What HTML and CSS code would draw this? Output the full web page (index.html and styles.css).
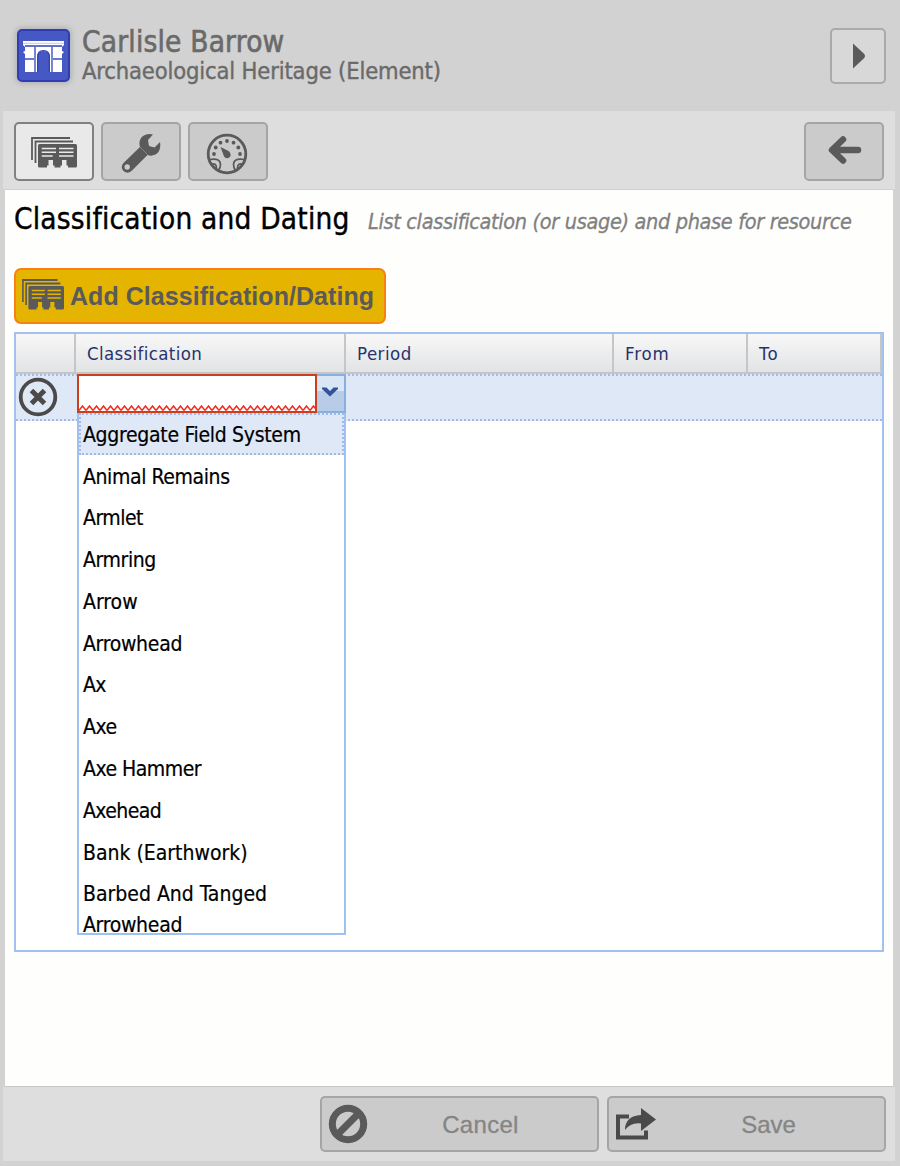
FILE: index.html
```
<!DOCTYPE html>
<html lang="en">
<head>
<meta charset="utf-8">
<title>Carlisle Barrow</title>
<link rel="stylesheet" href="styles.css">
</head>
<body>
<svg class="defs" width="0" height="0">
  <defs>
    <symbol id="cards" viewBox="0 0 46 31">
      <path d="M1 23V1h38M4.500 26V4.500h37.500" fill="none" stroke="currentColor" stroke-width="1.800"/>
      <path fill="currentColor" d="M8.500 7h36a1.500 1.500 0 0 1 1.500 1.500v20.500a1.500 1.500 0 0 1-1.500 1.500H37V28.500h-1.500V23h-4.500v5.500H29.500v2H23.500V28.500H22V23h-4.500v5.500H16v2H8.500A1.500 1.500 0 0 1 7 29V8.500A1.500 1.500 0 0 1 8.500 7z"/>
      <path d="M10.700 11.500h14.300M10.700 15.200h14.300M10.700 18.900h11M28 11.500h14.500M28 15.200h14.500M28 18.900h14.500" fill="none" class="cards-lines" stroke-width="1.500"/>
    </symbol>
  </defs>
</svg>
<div class="app">
  <header class="header">
    <div class="logo">
      <svg width="53" height="53" viewBox="0 0 53 53">
        <rect x="1" y="1" width="51" height="51" rx="4" fill="#4658c4" stroke="#2e3db4" stroke-width="2"/>
        <path d="M6 12h41v4l-2 2v4l2 1-2 2v18H33V28q0-6-6.500-6T20 28v15H8V25l-2-2 2-1v-4l-2-2z" fill="#fff"/>
        <path d="M6 14.300h41" stroke="#c3caee" stroke-width="1"/>
        <path d="M8 17h37M20.700 43V28q0-6.300 5.800-6.300t5.800 6.300v15" fill="none" stroke="#3343b4" stroke-width="1.300"/>
        <path d="M18 18v25M35 18v25M8 30h9M36 30h9" fill="none" stroke="#6a79d0" stroke-width="1.800"/>
      </svg>
    </div>
    <div class="heading">
      <div class="name"><span class="t-name">Carlisle Barrow</span></div>
      <div class="kind"><span class="t-kind">Archaeological Heritage (Element)</span></div>
    </div>
    <button class="expand">
      <svg width="14" height="26" viewBox="0 0 14 26"><path d="M1 .5 12.300 11q1.500 2 0 4L1 25.500z" fill="#5a5a5a"/></svg>
    </button>
  </header>
  <main class="panel">
    <nav class="toolbar">
      <button class="tool tool-on"><svg class="i-cards" width="46" height="31"><use href="#cards"/></svg></button>
      <button class="tool">
        <svg class="i-wrench" width="40" height="40" viewBox="0 0 40 40">
          <path d="M32 1.500 27 7l1 6 5.500 1.500L39 9q1.500 9-4.500 12.500-4 2-8 .5L10.500 38q-4 3.500-8 0-3.500-4 0-8L19 14q-2-7 3-11 4.500-3.200 10-1.500z" fill="#5a5a5a"/>
          <circle cx="6.200" cy="34" r="2.700" fill="#cbcbcb"/><path d="m19 14 7.500 7.500" stroke="#858585"/>
        </svg>
      </button>
      <button class="tool">
        <svg class="i-gauge" width="42" height="42" viewBox="0 0 42 42" fill="none" stroke="#5a5a5a">
          <circle cx="21" cy="21" r="18.800" stroke-width="2.800"/>
          <g fill="#5a5a5a" stroke="none"><circle cx="8" cy="21" r="1.900"/><circle cx="9.700" cy="14.500" r="1.900"/><circle cx="14.500" cy="9.700" r="1.900"/><circle cx="21" cy="8" r="1.900"/><circle cx="27.500" cy="9.700" r="1.900"/><circle cx="32.300" cy="14.500" r="1.900"/><circle cx="34" cy="21" r="1.900"/>
          <path d="m14.500 14 8 4q3 2.500 1.800 5.500-2.300 3-5.300 1-1.300-1-1.700-3z"/></g>
          <path d="M4 26.500q10-2 10.500 5 0 3.500-2 6M5.500 31q5-1 5 4M38 26.500q-10-2-10.500 5 0 3.500 2 6M36.500 31q-5-1-5 4" stroke-width="1.700"/>
        </svg>
      </button>
      <button class="tool tool-back">
        <svg class="i-back" width="34" height="28" viewBox="0 0 34 28"><path d="M15 3.500 4 14l11 10.500M5 14h25" fill="none" stroke="#5a5a5a" stroke-width="6.500" stroke-linecap="round" stroke-linejoin="round"/></svg>
      </button>
    </nav>
    <section class="content">
      <div class="title-row">
        <h1><span class="t-title">Classification and Dating</span></h1>
        <p><span class="t-desc">List classification (or usage) and phase for resource</span></p>
      </div>
      <button class="add">
        <svg width="42" height="31" viewBox="0 0 46 31" preserveAspectRatio="none"><use href="#cards" width="46" height="31"/></svg>
        <span class="t-add">Add Classification/Dating</span>
      </button>
      <div class="grid">
        <div class="row head">
          <div></div>
          <div><span class="t-h1">Classification</span></div>
          <div><span class="t-h2">Period</span></div>
          <div><span class="t-h3">From</span></div>
          <div><span class="t-h4">To</span></div>
        </div>
        <div class="row record">
          <div class="remove">
            <svg width="40" height="40" viewBox="0 0 40 40" fill="none" stroke="#4a4a4a"><circle cx="20" cy="20" r="17.300" stroke-width="3.800"/><path d="m13.500 13.500 13 13m0-13-13 13" stroke-width="5"/></svg>
          </div>
          <div class="combo">
            <div class="field">
              <svg width="237" height="6"><defs><pattern id="zig" width="7" height="6" patternUnits="userSpaceOnUse"><path d="M0 5.500 3.500 1 7 5.500" fill="none" stroke="#f02a1c" stroke-width="1.500"/></pattern></defs><rect width="237" height="6" fill="url(#zig)"/></svg>
            </div>
            <div class="trigger"><svg width="16" height="10" viewBox="0 0 16 10"><path d="M0 .5h4.500L8 4 11.500.5H16v1.500L8 9.500 0 2z" fill="#34529a"/></svg></div>
            <ul class="list">
              <li class="active"><span class="i1">Aggregate Field System</span></li>
              <li><span class="i2">Animal Remains</span></li>
              <li><span class="i3">Armlet</span></li>
              <li><span class="i4">Armring</span></li>
              <li><span class="i5">Arrow</span></li>
              <li><span class="i6">Arrowhead</span></li>
              <li><span class="i7">Ax</span></li>
              <li><span class="i8">Axe</span></li>
              <li><span class="i9">Axe Hammer</span></li>
              <li><span class="i10">Axehead</span></li>
              <li><span class="i11">Bank (Earthwork)</span></li>
              <li><span class="i12">Barbed And Tanged<br></span><span class="i6">Arrowhead</span></li>
            </ul>
          </div>
        </div>
      </div>
    </section>
    <footer class="footer">
      <button class="action">
        <svg width="40" height="40" viewBox="0 0 40 40" fill="none" stroke="#5a5a5a" stroke-width="7"><circle cx="20" cy="20" r="15.700"/><path d="M9 31 31 9"/></svg>
        <span class="t-cancel">Cancel</span>
      </button>
      <button class="action">
        <svg width="42" height="34" viewBox="0 0 42 34"><path d="M14 9.500H3v21h28v-7" fill="none" stroke="#4a4a4a" stroke-width="4"/><path d="M26 1 41 12.500 26 24v-7.500Q16 15 10 23q0-14 16-15z" fill="#4a4a4a"/></svg>
        <span class="t-save">Save</span>
      </button>
    </footer>
  </main>
</div>
</body>
</html>
```
FILE: styles.css
```
* { box-sizing: border-box; }
body { margin: 0; font-family: "DejaVu Sans Condensed", "DejaVu Sans", sans-serif; font-stretch: condensed; font-variant-ligatures: none; background: #d2d2d2; }
button { font: inherit; margin: 0; padding: 0; }
svg { display: block; flex: none; }
span { white-space: nowrap; }
.defs { position: absolute; }
.app { width: 900px; height: 1166px; display: flex; flex-direction: column; overflow: hidden; }
.header { height: 111px; flex: none; display: flex; align-items: flex-start; padding: 28px 14px 0 17px; color: #6a6a6a; }
.logo { width: 53px; height: 53px; margin-top: 1px; border-radius: 5px; box-shadow: 0 0 5px 2px #b4b4b4; }
.heading { flex: 1; padding-left: 12px; margin-top: -4px; }
.name { font-size: 29.500px; line-height: 36px; }
.kind { font-size: 23.500px; line-height: 25px; margin-top: -1px; }
.name { -webkit-text-stroke: .6px #6a6a6a; }
.kind { -webkit-text-stroke: .4px #6a6a6a; }
.t-name { letter-spacing: .2px; }
.t-kind { letter-spacing: -.15px; }
.expand { width: 56px; height: 56px; display: flex; align-items: center; justify-content: center; border: 2px solid #aaa; border-radius: 5px; background: #d8d8d8; padding-left: 2px; }
.panel { width: 892px; height: 1050px; margin-left: 3px; display: flex; flex-direction: column; background: #dedede; }
.toolbar { height: 78px; flex: none; display: flex; gap: 7px; padding: 11px 11px 0; }
.tool { width: 80px; height: 59px; display: flex; align-items: center; justify-content: center; border: 2px solid #a5a5a5; border-radius: 5px; background: #cbcbcb; color: #5a5a5a; }
.tool-on { background: #e9e9e9; border-color: #808080; }
.tool-back { margin-left: auto; padding-bottom: 4px; padding-left: 2px; }
.i-cards, .i-wrench { margin-top: 2px; }
.i-gauge { margin: 5px 2px 0 0; }
.cards-lines { stroke: var(--cut, #e9e9e9); }
.content { margin: 0 2px; height: 898px; flex: none; background: #fefefd; border-top: 1px solid #cfcfcf; border-bottom: 1px solid #c8c8c8; padding: 0 9px; display: flex; flex-direction: column; align-items: flex-start; box-shadow: -2px 0 #d2d2d2, 2px 0 #d2d2d2; }
.title-row { height: 78px; display: flex; align-items: baseline; padding-top: 10px; }
h1 { margin: 0; width: 354px; font-size: 29.500px; line-height: 38px; font-weight: 400; color: #000; -webkit-text-stroke: .4px #000; }
.t-title { letter-spacing: .2px; }
p { margin: 0; font-size: 21.500px; line-height: 30px; font-style: italic; color: #808080; -webkit-text-stroke: .3px #808080; }
.t-desc { letter-spacing: -.33px; }
.add { width: 372px; height: 56px; flex: none; display: flex; align-items: center; padding: 0 0 4px 6px; gap: 6px; border: 2px solid #f98012; border-radius: 7px; background: #e4b400; color: #5a5a5a; font: 700 25px/28px "Liberation Sans", Arial, sans-serif; --cut: #e4b400; }
.add .t-add { padding-top: 4px; letter-spacing: .05px; }
.grid { width: 870px; height: 620px; margin-top: 8px; flex: none; border: 2px solid #a3c0ee; background: #fff; }
.row { display: grid; grid-template-columns: 60px 270px 268px 134px 134px; }
.head { height: 40px; background: linear-gradient(#f8f8f8, #e2e3e4); border-bottom: 2px solid #c5c5c5; font-size: 18.500px; line-height: 39px; color: #26336e; }
.head div { height: 38px; border-right: 2px solid #c6c6c6; padding-left: 11px; }
.t-h1 { letter-spacing: .36px; }
.t-h2 { letter-spacing: .5px; }
.t-h3 { letter-spacing: .9px; }
.t-h4 { letter-spacing: 1.500px; }
.record { height: 47px; background: #dfe8f6; border-top: 2px dotted #a3bae9; border-bottom: 2px dotted #a3bae9; }
.remove { padding: 1px 0 0 2px; }
.combo { position: relative; width: 269px; height: 39px; margin: -2px 0 0 1px; display: flex; }
.field { width: 240px; height: 39px; border: 2px solid #cc3f1c; background: #fff; display: flex; align-items: flex-end; overflow: hidden; }
.trigger { width: 29px; height: 39px; padding: 11px 0 0 5px; background: linear-gradient(#d8e6f5 0 44%, #b8cce9 44%); border: 2px solid #88b0df; border-left: 0; }
.list { position: absolute; left: 0; top: 39px; width: 269px; height: 522px; margin: 0; padding: 0; list-style: none; overflow: hidden; background: #fff; border: 2px solid #9fc1f2; border-top: 0; font-size: 21px; line-height: 31px; color: #000; }
.list li { height: 41.800px; padding: 7px 0 0 4px; -webkit-text-stroke: .2px #000; }
.list .active { padding: 4.500px 0 0 2px; border: 2px dotted #a3bae9; background: #dfe8f6; height: 41.500px; }
.i1, .i6 { letter-spacing: -.3px; }
.i2, .i4 { letter-spacing: -.4px; }
.i3, .i8, .i9 { letter-spacing: -.5px; }
.i5, .i11, .i12 { letter-spacing: 0; }
.i7, .i10 { letter-spacing: -.6px; }
.footer { flex: 1; display: flex; justify-content: flex-end; gap: 8px; padding: 9px 9px 0 0; }
.action { width: 279px; height: 56px; display: flex; align-items: center; padding-left: 6px; border: 2px solid #a5a5a5; border-radius: 5px; background: #cbcbcb; color: #858585; font: 24px/28px "Liberation Sans", Arial, sans-serif; -webkit-text-stroke: .3px #858585; }
.action span { flex: 1; text-align: center; padding: 1px 4px 0 0; }
.t-cancel { letter-spacing: .3px; }
```
